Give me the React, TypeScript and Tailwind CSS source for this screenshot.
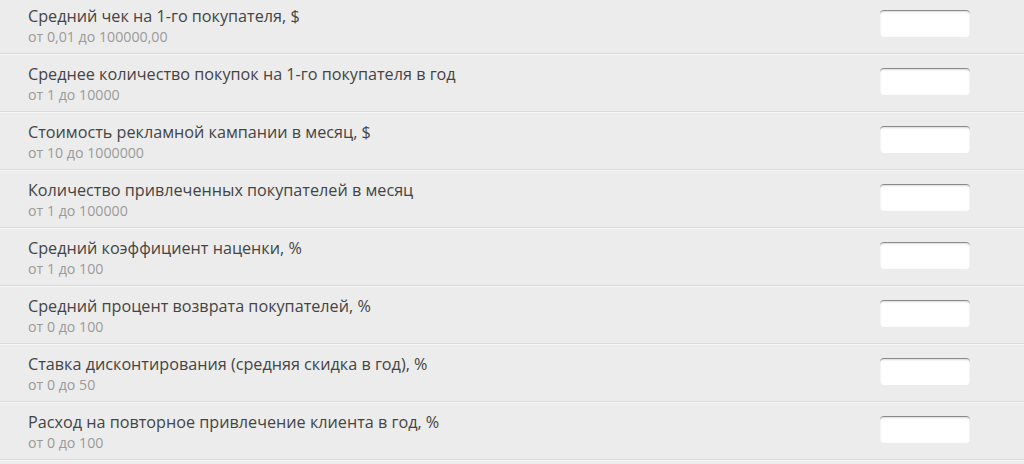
import React from "react";

const rows = [
  ["Средний чек на 1-го покупателя, $", "от 0,01 до 100000,00"],
  ["Среднее количество покупок на 1-го покупателя в год", "от 1 до 10000"],
  ["Стоимость рекламной кампании в месяц, $", "от 10 до 1000000"],
  ["Количество привлеченных покупателей в месяц", "от 1 до 100000"],
  ["Средний коэффициент наценки, %", "от 1 до 100"],
  ["Средний процент возврата покупателей, %", "от 0 до 100"],
  ["Ставка дисконтирования (средняя скидка в год), %", "от 0 до 50"],
  ["Расход на повторное привлечение клиента в год, %", "от 0 до 100"],
];

export default function App() {
  return (
    <div
      className="w-[1024px] h-[464px] overflow-hidden bg-[#ececec]"
      style={{ fontFamily: '"Open Sans", "Noto Sans", sans-serif' }}
    >
      <div className="-mt-[4px]">
        {rows.map(([t, s], i) => (
          <div
            key={i}
            className="h-[58px] flex items-center pl-[28px] border-b border-b-[#dadada] shadow-[0_1px_0_#f6f6f6]"
          >
            <div className="flex-1 pt-[2px]">
              <div className="text-[16.2px] leading-[22px] text-[#444444]">{t}</div>
              <div className="text-[14.2px] leading-[20px] text-[#9a9a9a]">{s}</div>
            </div>
            <div className="w-[90px] h-[27px] mr-[54px] mb-[3px] bg-white rounded-[4px] border-t border-t-[#8a8a8a] shadow-[inset_0_1px_2px_rgba(0,0,0,0.15)]" />
          </div>
        ))}
      </div>
    </div>
  );
}
